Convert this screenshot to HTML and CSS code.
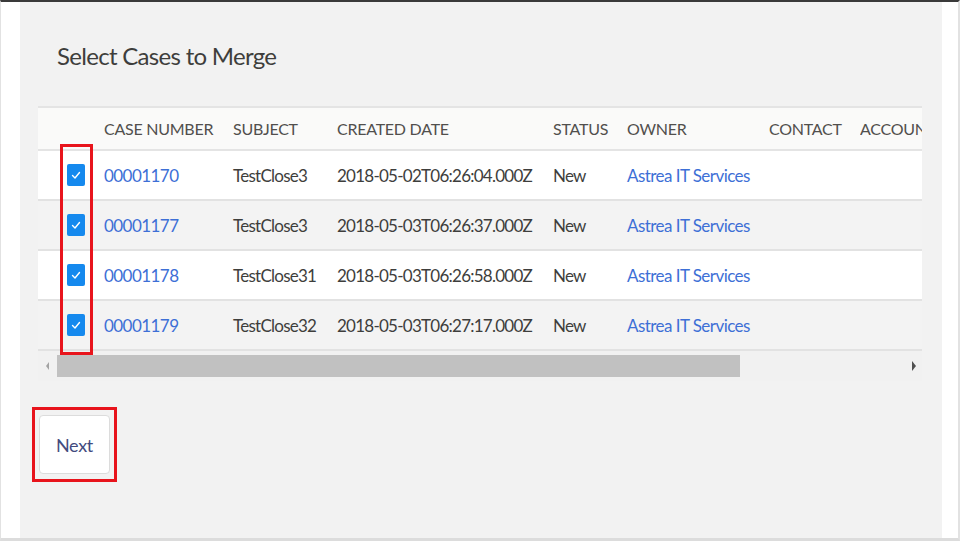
FILE: index.html
```html
<!DOCTYPE html>
<html>
<head>
<meta charset="utf-8">
<link rel="stylesheet" href="styles.css">
</head>
<body>
<div class="frame">
  <div class="panel">
    <h1 class="title">Select Cases to Merge</h1>
    <div class="table-wrap">
      <table class="grid">
        <colgroup>
          <col class="c0"><col class="c1"><col class="c2"><col class="c3"><col class="c4"><col class="c5"><col class="c6"><col class="c7">
        </colgroup>
        <thead>
          <tr>
            <th></th><th>CASE NUMBER</th><th>SUBJECT</th><th>CREATED DATE</th><th>STATUS</th><th>OWNER</th><th>CONTACT</th><th>ACCOUNT NAME</th>
          </tr>
        </thead>
        <tbody>
          <tr class="odd">
            <td class="cb-cell"><span class="cb"><svg viewBox="0 0 18 22" width="18" height="22"><path d="M5.5 11.5 L8 14 L12.5 8.5" fill="none" stroke="#fff" stroke-width="1.4" stroke-linecap="round" stroke-linejoin="round"/></svg></span></td>
            <td><a class="link">00001170</a></td><td>TestClose3</td><td>2018-05-02T06:26:04.000Z</td><td>New</td><td><a class="link">Astrea IT Services</a></td><td></td><td></td>
          </tr>
          <tr class="even">
            <td class="cb-cell"><span class="cb"><svg viewBox="0 0 18 22" width="18" height="22"><path d="M5.5 11.5 L8 14 L12.5 8.5" fill="none" stroke="#fff" stroke-width="1.4" stroke-linecap="round" stroke-linejoin="round"/></svg></span></td>
            <td><a class="link">00001177</a></td><td>TestClose3</td><td>2018-05-03T06:26:37.000Z</td><td>New</td><td><a class="link">Astrea IT Services</a></td><td></td><td></td>
          </tr>
          <tr class="odd">
            <td class="cb-cell"><span class="cb"><svg viewBox="0 0 18 22" width="18" height="22"><path d="M5.5 11.5 L8 14 L12.5 8.5" fill="none" stroke="#fff" stroke-width="1.4" stroke-linecap="round" stroke-linejoin="round"/></svg></span></td>
            <td><a class="link">00001178</a></td><td>TestClose31</td><td>2018-05-03T06:26:58.000Z</td><td>New</td><td><a class="link">Astrea IT Services</a></td><td></td><td></td>
          </tr>
          <tr class="even">
            <td class="cb-cell"><span class="cb"><svg viewBox="0 0 18 22" width="18" height="22"><path d="M5.5 11.5 L8 14 L12.5 8.5" fill="none" stroke="#fff" stroke-width="1.4" stroke-linecap="round" stroke-linejoin="round"/></svg></span></td>
            <td><a class="link">00001179</a></td><td>TestClose32</td><td>2018-05-03T06:27:17.000Z</td><td>New</td><td><a class="link">Astrea IT Services</a></td><td></td><td></td>
          </tr>
        </tbody>
      </table>
      <div class="scrollbar">
        <span class="arrow-left"></span>
        <div class="thumb-track"><div class="thumb"></div></div>
        <span class="arrow-right"></span>
      </div>
      <div class="mark mark-checks"></div>
    </div>
    <div class="actions">
      <button class="btn">Next</button>
      <div class="mark mark-next"></div>
    </div>
  </div>
</div>
</body>
</html>
```
FILE: styles.css
```css
* { box-sizing: border-box; }
html, body { margin: 0; padding: 0; background: #fff; }
body { width: 960px; height: 541px; overflow: hidden; font-family: Lato, "Open Sans", sans-serif; }

.frame {
  width: 960px;
  height: 541px;
  border-top: 2px solid #3a3a3a;
  border-left: 1px solid #e2e2e2;
  border-right: 2px solid #e2e2e2;
  border-bottom: 3px solid #dcdcdc;
  padding: 0 16px 0 19px;
  background: #fff;
}

.panel {
  height: 100%;
  background: #f2f2f2;
  padding: 36px 20px 0 18px;
}

.title {
  margin: 0 0 32px 19px;
  font-size: 24px;
  line-height: 36px;
  font-weight: 400;
  color: #3e3e3c;
  letter-spacing: -0.7px;
}

.table-wrap {
  position: relative;
  width: 884px;
  overflow: hidden;
}

.grid {
  border-collapse: collapse;
  table-layout: fixed;
  width: 1000px;
  font-size: 17px;
  color: #3e3e3c;
}
.c0 { width: 66px; }
.c1 { width: 129px; }
.c2 { width: 104px; }
.c3 { width: 216px; }
.c4 { width: 74px; }
.c5 { width: 142px; }
.c6 { width: 91px; }
.c7 { width: 178px; }

.grid th {
  height: 43px;
  text-align: left;
  font-weight: 400;
  font-size: 16px;
  color: #514f4d;
  background: #fafaf9;
  border-top: 2px solid #e4e4e4;
  border-bottom: 2px solid #e4e4e4;
  padding: 0;
  white-space: nowrap;
  overflow: hidden;
  letter-spacing: -0.25px;
}

.grid td {
  height: 50px;
  padding: 0;
  white-space: nowrap;
  border-bottom: 2px solid #e2e2e2;
  letter-spacing: -0.75px;
}
.grid tr.odd td { background: #fff; }
.grid tr.even td { background: #f3f3f3; }

.cb-cell { padding-left: 29px !important; }
.cb {
  display: block;
  width: 18px;
  height: 22px;
  border-radius: 2px;
  background: #1589ee;
}
.cb svg { display: block; }

.link { color: #3d6fd6; text-decoration: none; letter-spacing: -0.55px; }

.scrollbar {
  display: flex;
  align-items: center;
  height: 30px;
  background: #f1f1f1;
}
.arrow-left {
  width: 0; height: 0;
  margin: 0 8px 0 8px;
  border-top: 4px solid transparent;
  border-bottom: 4px solid transparent;
  border-right: 3px solid #a3a3a3;
}
.thumb-track { flex: 1; height: 22px; padding-right: 164px; }
.thumb { height: 22px; background: #c1c1c1; }
.arrow-right {
  width: 0; height: 0;
  margin: 0 6px 0 8px;
  border-top: 5px solid transparent;
  border-bottom: 5px solid transparent;
  border-left: 4px solid #505050;
}

.actions {
  position: relative;
  padding-top: 34px;
}
.btn {
  display: block;
  width: 71px;
  height: 59px;
  margin-left: 1px;
  background: #fff;
  border: 1px solid #dcdcdc;
  border-radius: 4px;
  font-family: Lato, "Open Sans", sans-serif;
  font-size: 18px;
  color: #434b7e;
  padding: 0;
  letter-spacing: -0.3px;
}

.mark {
  position: absolute;
  border: 3px solid #e8141c;
}
.mark-checks { left: 22px; top: 38px; width: 33px; height: 211px; }
.mark-next { left: -6px; top: 26px; width: 85px; height: 75px; }
```
